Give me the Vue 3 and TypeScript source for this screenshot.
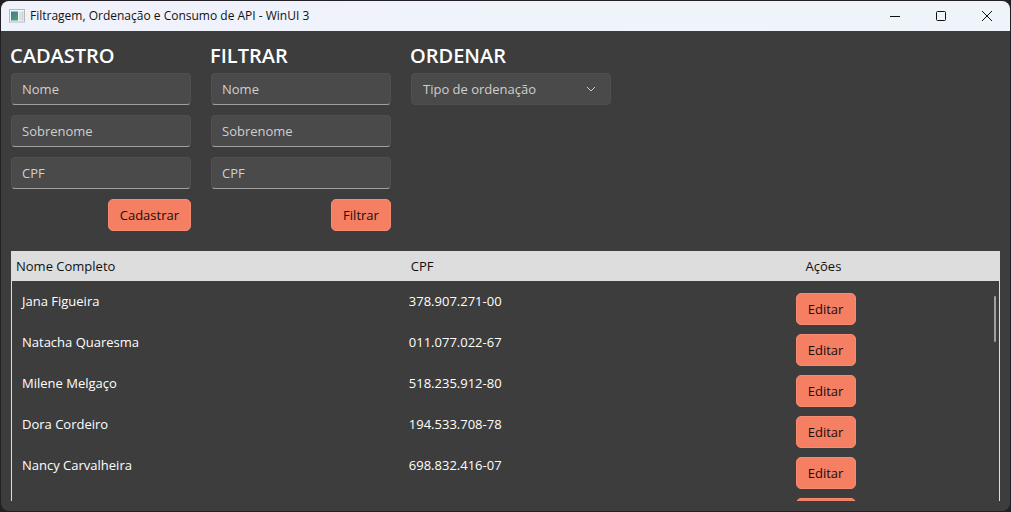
<script setup lang="ts">
import { reactive, ref } from 'vue'

interface Person {
  name: string
  cpf: string
}

interface PersonForm {
  id: string
  title: string
  action: string
}

const forms: PersonForm[] = [
  { id: 'cadastro', title: 'CADASTRO', action: 'Cadastrar' },
  { id: 'filtro', title: 'FILTRAR', action: 'Filtrar' },
]
const fields: string[] = ['Nome', 'Sobrenome', 'CPF']
const values = reactive<Record<string, string>>({})
const order = ref('')

const people: Person[] = [
  { name: 'Jana Figueira', cpf: '378.907.271-00' },
  { name: 'Natacha Quaresma', cpf: '011.077.022-67' },
  { name: 'Milene Melgaço', cpf: '518.235.912-80' },
  { name: 'Dora Cordeiro', cpf: '194.533.708-78' },
  { name: 'Nancy Carvalheira', cpf: '698.832.416-07' },
  { name: '', cpf: '' },
]
</script>

<template>
  <div class="desktop">
    <div class="window">
      <header class="titlebar">
        <svg class="app-icon" width="16" height="14" viewBox="0 0 16 14" aria-hidden="true">
          <defs>
            <linearGradient id="pane" x1="0" y1="0" x2="0.6" y2="1">
              <stop offset="0" stop-color="#3f7894" />
              <stop offset="1" stop-color="#519b78" />
            </linearGradient>
          </defs>
          <rect x="0.5" y="0.5" width="15" height="12.5" fill="#f4f6f7" stroke="#b5b9bf" />
          <rect x="2" y="2.5" width="7" height="9" fill="url(#pane)" />
          <rect x="10" y="2.5" width="2" height="9" fill="#dce2e4" />
          <rect x="12.5" y="2.5" width="2" height="9" fill="#c9d4d6" />
        </svg>
        <h1>Filtragem, Ordenação e Consumo de API - WinUI 3</h1>
        <div class="controls">
          <button type="button" aria-label="Minimizar">
            <svg width="12" height="12" viewBox="0 0 12 12"><path d="M1 6.5H11" /></svg>
          </button>
          <button type="button" aria-label="Maximizar">
            <svg width="12" height="12" viewBox="0 0 12 12"><rect x="1.5" y="1.5" width="9" height="9" rx="1" /></svg>
          </button>
          <button type="button" aria-label="Fechar">
            <svg width="12" height="12" viewBox="0 0 12 12"><path d="M1 1L11 11M11 1L1 11" /></svg>
          </button>
        </div>
      </header>

      <main>
        <section class="panels">
          <form v-for="form in forms" :key="form.id" class="panel" @submit.prevent>
            <h2>{{ form.title }}</h2>
            <input
              v-for="field in fields"
              :key="field"
              v-model="values[form.id + field]"
              type="text"
              :placeholder="field"
              :aria-label="field"
            />
            <button type="submit" class="accent">{{ form.action }}</button>
          </form>
          <div class="panel sort">
            <h2 id="sort-title">ORDENAR</h2>
            <div class="combo">
              <select v-model="order" aria-labelledby="sort-title">
                <option value="">Tipo de ordenação</option>
              </select>
              <svg width="10" height="6" viewBox="0 0 10 6" aria-hidden="true"><path d="M1 1L5 5L9 1" /></svg>
            </div>
          </div>
        </section>

        <div class="grid">
          <table>
            <thead>
              <tr>
                <th scope="col">Nome Completo</th>
                <th scope="col">CPF</th>
                <th scope="col">Ações</th>
              </tr>
            </thead>
            <tbody>
              <tr v-for="(person, i) in people" :key="i">
                <td>{{ person.name }}</td>
                <td>{{ person.cpf }}</td>
                <td><button type="button" class="accent">{{ person.name ? 'Editar' : '' }}</button></td>
              </tr>
            </tbody>
          </table>
          <div class="thumb"></div>
        </div>
      </main>
    </div>
  </div>
</template>

<style>
body {
  background: #222024;
}
</style>

<style scoped>
* {
  box-sizing: border-box;
}
.desktop {
  height: 100vh;
  padding: 1px;
  background: #222024;
  font-family: 'Open Sans', 'Noto Sans', sans-serif;
  font-size: 13px;
  line-height: 20px;
}
.window {
  height: 100%;
  display: flex;
  flex-direction: column;
  overflow: hidden;
  border-radius: 8px;
  background: #3d3d3d;
  color: #fff;
}
.titlebar {
  flex: none;
  height: 30px;
  display: flex;
  align-items: center;
  padding-left: 8px;
  background: linear-gradient(90deg, #f0f2fb, #eff4fa);
  color: #111;
}
.app-icon {
  margin-right: 5px;
}
h1 {
  flex: 1;
  margin: 0;
  font-size: 12px;
  font-weight: 400;
  line-height: 16px;
}
.controls {
  display: flex;
}
.controls button {
  width: 46px;
  height: 30px;
  padding: 0;
  border: 0;
  background: none;
  display: grid;
  place-items: center;
}
.controls svg {
  fill: none;
  stroke: #111;
  stroke-width: 1;
}
main {
  flex: 1;
  min-height: 0;
  display: flex;
  flex-direction: column;
  gap: 20px;
  padding: 10px;
}
.panels {
  display: flex;
  gap: 20px;
  align-items: flex-start;
}
.panel {
  width: 180px;
  display: flex;
  flex-direction: column;
  gap: 10px;
}
.sort {
  width: 200px;
}
h2 {
  margin: 0 0 -8px -1px;
  font-size: 20px;
  font-weight: 600;
  line-height: 30px;
}
input,
select {
  width: 100%;
  height: 32px;
  border: 1px solid #4f4f4f;
  border-radius: 4px;
  background: #4a4a4a;
  color: #cfcfcf;
  font: inherit;
}
input {
  padding: 0 10px;
  border-bottom-color: #a0a0a0;
}
input::placeholder {
  color: #cfcfcf;
  opacity: 1;
}
select {
  appearance: none;
  padding: 0 32px 0 11px;
}
.combo {
  position: relative;
}
.combo svg {
  position: absolute;
  right: 15px;
  top: 13px;
  fill: none;
  stroke: #cfcfcf;
  pointer-events: none;
}
.accent {
  min-width: 60px;
  height: 32px;
  padding: 0 11px;
  border: 1px solid #f68b71;
  border-radius: 5px;
  background: #f57f63;
  color: #1a0d0a;
  font: inherit;
  line-height: 20px;
}
.panel .accent {
  align-self: flex-end;
}
.grid {
  position: relative;
  flex: 1;
  min-height: 0;
  overflow: hidden;
  border: solid #ddd;
  border-width: 0 1px;
}
table,
thead,
tbody {
  display: block;
}
tr {
  display: grid;
  grid-template-columns: 2fr 2fr 1fr;
}
thead {
  background: #ddd;
  color: #111;
}
th {
  padding: 5px 4px;
  font-weight: 400;
  text-align: left;
}
tbody {
  padding: 10px;
}
tbody tr {
  height: 41px;
}
td {
  padding: 0;
}
td .accent {
  margin-top: 2px;
}
.thumb {
  position: absolute;
  top: 45px;
  right: 3px;
  width: 2px;
  height: 46px;
  border-radius: 1px;
  background: #a0a0a0;
}
</style>
